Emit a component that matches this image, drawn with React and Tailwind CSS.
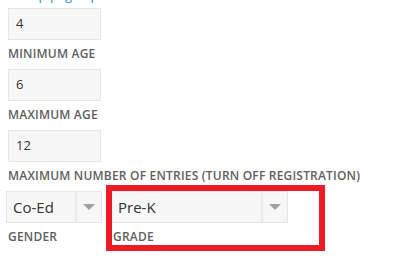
import React from 'react';

const font = { fontFamily: '"Open Sans", "Liberation Sans", sans-serif' };

const Field = ({ value, label }) => (
    <div className="mb-[8px]">
        <div className="w-[93px] h-[32px] bg-[#f7f7f7] border border-[#e6e6e6] flex items-center pl-[7px] text-[13px] text-[#333]">
            {value}
        </div>
        <div className="mt-[6px] leading-[15px] text-[12px] font-semibold text-[#606060] tracking-[0.2px]">{label}</div>
    </div>
);

const Select = ({ value, width, label }) => (
    <div>
        <div className={`${width} h-[32px] bg-[#f7f7f7] border border-[#e6e6e6] flex`}>
            <div className="flex-1 flex items-center pl-[6px] text-[15px] text-[#333]">{value}</div>
            <div className="w-[26px] border-l-2 border-[#ebebeb] flex items-center justify-center">
                <div className="w-0 h-0 border-l-[6px] border-r-[6px] border-t-[6px] border-l-transparent border-r-transparent border-t-[#a0a0a0]" />
            </div>
        </div>
        <div className="mt-[6px] leading-[15px] text-[12px] font-semibold text-[#606060] tracking-[0.2px] pl-[2px]">{label}</div>
    </div>
);

export default function App() {
    return (
        <div className="relative w-[396px] h-[269px] bg-white overflow-hidden" style={font}>
            <div className="pl-[8px]">
                {/* cut-off heading above */}
                <div className="h-[8px] overflow-hidden">
                    <div className="-mt-[13px] text-[13px] leading-[16px] text-[#2a8fd6]">Group page options</div>
                </div>
                <Field value="4" label="MINIMUM AGE" />
                <Field value="6" label="MAXIMUM AGE" />
                <Field value="12" label="MAXIMUM NUMBER OF ENTRIES (TURN OFF REGISTRATION)" />
            </div>
            <div className="flex gap-[9px] pl-[6px] mt-[1px]">
                <Select value="Co-Ed" width="w-[96px]" label="GENDER" />
                <Select value="Pre-K" width="w-[177px]" label="GRADE" />
            </div>
            {/* red annotation box */}
            <div className="absolute left-[106px] top-[185px] w-[219px] h-[66px] border-[6px] border-[#ed1c24]" />
        </div>
    );
}
